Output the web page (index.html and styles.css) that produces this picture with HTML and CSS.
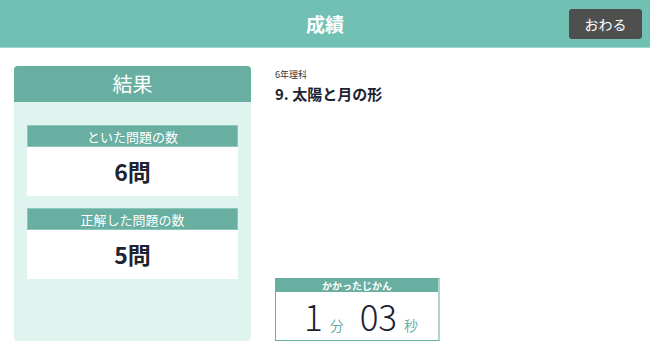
FILE: index.html
```html
<!DOCTYPE html>
<html lang="ja">

<head>
    <meta charset="UTF-8">
    <meta name="viewport" content="width=device-width, initial-scale=1.0">
    <title>成績</title>
    <link rel="stylesheet" href="styles.css">
</head>

<body>
    <header class="topbar">
        <h1>成績</h1>
        <button type="button" class="end-btn">おわる</button>
    </header>

    <main class="content">
        <section class="result">
            <h2>結果</h2>
            <div class="result-body">
                <div class="stat">
                    <div class="stat-label">といた問題の数</div>
                    <div class="stat-value">6問</div>
                </div>
                <div class="stat">
                    <div class="stat-label">正解した問題の数</div>
                    <div class="stat-value">5問</div>
                </div>
            </div>
        </section>

        <section class="detail">
            <p class="subject">6年理科</p>
            <h3 class="unit">9. 太陽と月の形</h3>

            <div class="time">
                <div class="time-label">かかったじかん</div>
                <div class="time-value">
                    <span class="num">1</span><span class="unit-sm">分</span>
                    <span class="num">03</span><span class="unit-sm">秒</span>
                </div>
            </div>
        </section>
    </main>
</body>

</html>
```

FILE: styles.css
```css
/* General Reset */
* {
    margin: 0;
    padding: 0;
    box-sizing: border-box;
    font-family: 'Noto Sans CJK JP', 'Noto Sans', sans-serif;
}

body {
    background: #fff;
    color: #1d2330;
    width: 650px;
    height: 364px;
    overflow: hidden;
}

/* Header */
.topbar {
    height: 48px;
    background: #70c0b3;
    border-bottom: 1px solid #9fd6cc;
    display: flex;
    align-items: center;
    justify-content: center;
    position: relative;
}

.topbar h1 {
    font-size: 19px;
    font-weight: bold;
    color: #fff;
}

.end-btn {
    position: absolute;
    right: 8px;
    top: 9px;
    width: 73px;
    height: 30px;
    background: #4f4f4f;
    border: none;
    border-radius: 3px;
    color: #fff;
    font-size: 14px;
    cursor: pointer;
}

/* Main area */
.content {
    display: flex;
    gap: 24px;
    padding: 18px 210px 23px 14px;
    height: 316px;
}

/* Result panel */
.result {
    width: 237px;
    flex-shrink: 0;
    background: #dff3ef;
    border-radius: 4px;
    overflow: hidden;
    display: flex;
    flex-direction: column;
}

.result h2 {
    height: 36px;
    background: #68afa2;
    color: #fff;
    font-size: 20px;
    font-weight: normal;
    text-align: center;
    line-height: 36px;
}

.result-body {
    padding: 23px 13px 0;
    display: flex;
    flex-direction: column;
    gap: 12px;
}

.stat-label {
    height: 22px;
    background: #68afa2;
    color: #fff;
    font-size: 13px;
    text-align: center;
    line-height: 21px;
    border: 1px solid #8cc7bc;
}

.stat-value {
    height: 49px;
    background: #fff;
    font-size: 23px;
    font-weight: bold;
    text-align: center;
    line-height: 49px;
}

/* Detail column */
.detail {
    flex: 1;
    display: flex;
    flex-direction: column;
}

.subject {
    font-size: 9px;
    color: #333;
    margin-top: 2px;
}

.unit {
    font-size: 15px;
    font-weight: bold;
    margin-top: 2px;
}

/* Time box */
.time {
    margin-top: auto;
    width: 165px;
    border: 1px solid #68afa2;
    border-right: 2px solid #a9d6ce;
    height: 63px;
}

.time-label {
    height: 13px;
    background: #68afa2;
    color: #fff;
    font-size: 10px;
    font-weight: bold;
    text-align: center;
    line-height: 13px;
}

.time-value {
    display: flex;
    align-items: baseline;
    justify-content: center;
    height: 48px;
    padding: 2px 0 0 8px;
    gap: 7px;
}

.time-value .num {
    font-size: 35px;
    font-weight: 300;
    line-height: 44px;
}

.time-value .unit-sm {
    font-size: 14px;
    color: #68afa2;
    margin-right: 9px;
}

.time-value .unit-sm:last-child {
    margin-right: 0;
}
```
